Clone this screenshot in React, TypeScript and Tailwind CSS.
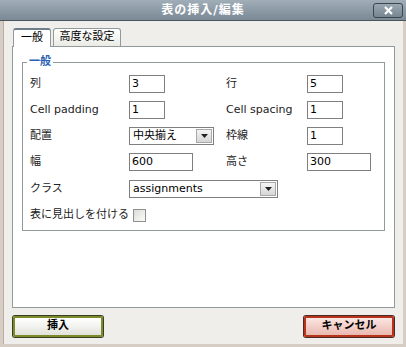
import React from "react";

const font = { fontFamily: '"DejaVu Sans", "Noto Sans CJK JP", sans-serif' };

function TextBox({ value, w }: { value: string; w: string }) {
  return (
    <div className={`${w} h-[18px] border border-[#7f7f7f] bg-white px-[2px] text-[11px] leading-[16px] text-black`}>
      {value}
    </div>
  );
}

function Select({ value, w }: { value: string; w: string }) {
  return (
    <div className={`${w} h-[18px] border border-[#7f7f7f] bg-white flex items-stretch`}>
      <div className="flex-1 px-[3px] text-[11px] leading-[16px] text-black">{value}</div>
      <div className="w-[16px] m-[1px] border border-[#a8a8a8] bg-gradient-to-b from-[#f4f4f4] to-[#d6d6d6] flex items-center justify-center">
        <svg width="7" height="4" viewBox="0 0 7 4">
          <path d="M0 0h7L3.5 4z" fill="#222" />
        </svg>
      </div>
    </div>
  );
}

export default function App() {
  return (
    <div className="w-[406px] h-[347px] bg-[#efeeeb] flex flex-col border-l-[3px] border-r-[3px] border-b-[3px] border-[#d6cdc4]" style={font}>
      {/* title bar */}
      <div className="relative -mx-[3px] h-[21px] bg-gradient-to-b from-[#a1aeb8] to-[#7a8995] border-b border-[#4a545c] flex items-center justify-center">
        <span className="text-[12px] font-bold text-white tracking-[1px]">表の挿入/編集</span>
        <div className="absolute right-[3px] top-[3px] w-[30px] h-[15px] rounded-[3px] border border-[#3c464e] bg-gradient-to-b from-[#9aa8b3] to-[#76858f] flex items-center justify-center">
          <svg width="9" height="9" viewBox="0 0 9 9">
            <path d="M1 1l7 7M8 1L1 8" stroke="#fff" strokeWidth="2.2" />
          </svg>
        </div>
      </div>

      <div className="flex-1 flex flex-col border-l border-[#b8ada3] px-[8px]">
        {/* tabs */}
        <div className="flex items-end gap-[2px] mt-[6px] pl-[1px] h-[19px]">
          <div className="h-[19px] w-[38px] -mb-px z-10 rounded-t-[3px] border border-b-0 border-[#919b9c] border-t-[#6d7d8a] border-t-2 bg-white text-[11px] text-black flex items-center justify-center">
            一般
          </div>
          <div className="h-[18px] w-[68px] rounded-t-[3px] border border-b-0 border-[#919b9c] bg-gradient-to-b from-white to-[#ebebe5] text-[11px] text-black flex items-center justify-center">
            高度な設定
          </div>
        </div>

        {/* panel */}
        <div className="h-[262px] border border-[#919b9c] bg-white px-[9px] pt-[9px]">
          <div className="relative border border-[#919b9c] h-[169px] mt-[6px] pl-[7px] pt-[12px]">
            <span className="absolute -top-[8px] left-[4px] bg-white px-[2px] text-[11px] font-bold text-[#2a61b5] leading-[14px]">
              一般
            </span>
            <div className="grid grid-cols-[99px_97px_81px_1fr] gap-y-[8px] items-center text-[11px] text-[#222]">
              <span>列</span>
              <TextBox value="3" w="w-[36px]" />
              <span>行</span>
              <TextBox value="5" w="w-[36px]" />

              <span>Cell padding</span>
              <TextBox value="1" w="w-[36px]" />
              <span>Cell spacing</span>
              <TextBox value="1" w="w-[36px]" />

              <span>配置</span>
              <Select value="中央揃え" w="w-[85px]" />
              <span>枠線</span>
              <TextBox value="1" w="w-[36px]" />

              <span>幅</span>
              <TextBox value="600" w="w-[64px]" />
              <span>高さ</span>
              <TextBox value="300" w="w-[64px]" />

              <span className="mt-[1px]">クラス</span>
              <div className="col-span-3 mt-[1px]">
                <Select value="assignments" w="w-[149px]" />
              </div>

              <span className="mt-[1px]">表に見出しを付ける</span>
              <div className="col-span-3 pl-[4px] mt-[1px]">
                <div className="w-[13px] h-[13px] border border-[#8e8f8f] bg-gradient-to-br from-[#dcdcd7] to-[#fbfbf9]" />
              </div>
            </div>
          </div>
        </div>

        {/* buttons */}
        <div className="flex justify-between mt-[8px] px-[1px]">
          <div className="w-[90px] h-[21px] rounded-[2px] border-2 border-[#7b8a2a] shadow-[0_0_0_1px_#3a3f22] bg-gradient-to-b from-[#ffffff] via-[#f2f2ee] to-[#e2e2da] flex items-center justify-center text-[11px] font-bold text-black">
            挿入
          </div>
          <div className="w-[90px] h-[21px] rounded-[2px] border-2 border-[#b8331c] shadow-[0_0_0_1px_#4a2a22] bg-gradient-to-b from-[#fbe6e2] via-[#f3cfc8] to-[#eab9b0] flex items-center justify-center text-[11px] font-bold text-black">
            キャンセル
          </div>
        </div>
      </div>
    </div>
  );
}
